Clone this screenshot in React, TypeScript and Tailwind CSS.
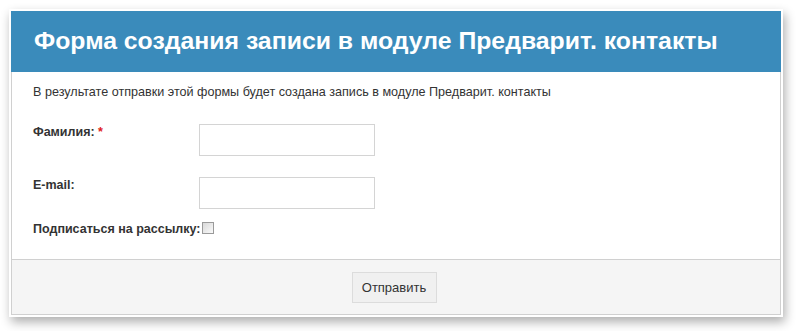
import { useState } from "react";

export default function App() {
  const [checked, setChecked] = useState(false);

  return (
    <div className="w-[796px] h-[331px] bg-white pl-[9px] pt-[9px] font-['Liberation_Sans',Arial,sans-serif] text-[#333]">
      <div className="w-[774px] h-[308px] bg-white p-[2px] shadow-[2px_5px_10px_rgba(0,0,0,0.32)]">
        <div className="h-full flex flex-col border border-t-0 border-[#d0d0d0]">
          {/* Header */}
          <div className="h-[61px] -mx-px bg-[#3a8bbb] flex items-center px-[23px]">
            <h1 className="text-white font-bold text-[24.8px] leading-none">
              Форма создания записи в модуле Предварит. контакты
            </h1>
          </div>

          {/* Body */}
          <div className="flex-1 bg-white pl-[21px] pt-[13px]">
            <p className="text-[12.6px] leading-[14px]">
              В результате отправки этой формы будет создана запись в модуле Предварит. контакты
            </p>

            <div className="mt-[25px] flex">
              <label className="w-[166px] pt-[1px] text-[12.5px] leading-[14px] font-bold">
                Фамилия: <span className="text-[#e0201c]">*</span>
              </label>
              <input
                type="text"
                className="w-[176px] h-[32px] border border-[#d4d4d4] outline-none px-2 text-[12px]"
              />
            </div>

            <div className="mt-[21px] flex">
              <label className="w-[166px] pt-[1px] text-[12.5px] leading-[14px] font-bold">E-mail:</label>
              <input
                type="text"
                className="w-[176px] h-[32px] border border-[#d4d4d4] outline-none px-2 text-[12px]"
              />
            </div>

            <div className="mt-[11px] flex items-center">
              <span className="text-[12.5px] leading-[14px] font-bold mt-[2px]">Подписаться на рассылку:</span>
              <button
                onClick={() => setChecked((s) => !s)}
                className="ml-[1px] -mt-[1px] w-[12px] h-[12px] border border-[#9a9a9a] bg-gradient-to-br from-[#d8d8d8] to-[#fafafa] flex items-center justify-center text-[9px] leading-none"
              >
                {checked ? "✓" : ""}
              </button>
            </div>
          </div>

          {/* Footer */}
          <div className="h-[55px] bg-[#f5f5f5] border-t border-[#d0d0d0] flex items-center justify-center">
            <button className="w-[85px] h-[31px] bg-[#f0f0f0] border border-[#dcdcdc] text-[13px] text-[#333] -ml-[4px] mt-[1px]">
              Отправить
            </button>
          </div>
        </div>
      </div>
    </div>
  );
}
